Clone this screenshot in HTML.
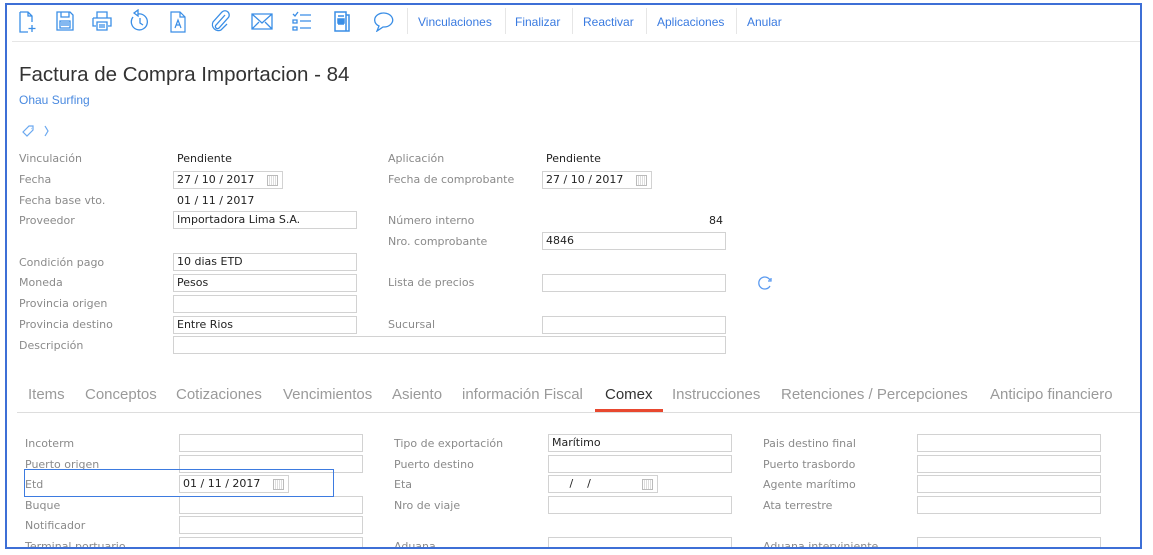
<!DOCTYPE html>
<html><head><meta charset="utf-8"><style>
*{margin:0;padding:0;box-sizing:border-box}
html,body{width:1153px;height:555px;overflow:hidden}
body{background:#fff;position:relative;font-family:"DejaVu Sans",sans-serif}
.frame{position:absolute;left:5px;top:3px;width:1137px;height:546px;border:2px solid #3d6fd6;overflow:hidden}
.a{position:absolute;white-space:nowrap}
.lb{position:absolute;font-size:11px;color:#8a8a8a;white-space:nowrap;line-height:14px}
.v{position:absolute;font-size:11px;color:#222;white-space:nowrap;line-height:14px}
.in{position:absolute;height:18px;border:1px solid #d2d2d2;background:#fff;font-size:11px;color:#222;padding:1px 0 0 3px;line-height:14px;white-space:nowrap;overflow:hidden}
.cal{position:absolute;right:4px;top:3px;width:11px;height:11px;border:1px solid #bbb;background:repeating-linear-gradient(90deg,#fff 0 1px,#ddd 1px 2px)}
.tb{position:absolute;top:6px;font-family:"Liberation Sans",sans-serif;font-size:12px;color:#3a7be0}
.sep{position:absolute;top:8px;width:1px;height:26px;background:#e6e6e6}
.tab{position:absolute;top:386px;font-family:"Liberation Sans",sans-serif;font-size:15px;color:#9a9a9a}
svg{position:absolute}
</style></head><body>
<div class="frame">
<div style="position:absolute;left:-7px;top:-5px;width:1148px;height:553px;overflow:hidden">
<svg style="left:18px;top:11px" width="20" height="22" viewBox="0 0 20 22" fill="none" stroke="#3a8ee6" stroke-width="1.3"><path d="M2 1h8l4 4v6M2 1v20h8M10 1v4h4M14 14v7M10.5 17.5h7"/></svg>
<svg style="left:56px;top:11px" width="18" height="20" viewBox="0 0 18 20" fill="none" stroke="#3a8ee6" stroke-width="1.3"><path d="M1 1h13l3 3v15H1z M5 1v5h8V1 M4 10h10v7H4z"/><path d="M5 12h8M5 14h8" /></svg>
<svg style="left:92px;top:11px" width="20" height="20" viewBox="0 0 20 20" fill="none" stroke="#3a8ee6" stroke-width="1.3"><path d="M5 7V1h10v6M1 7h18v8h-3M1 7v8h3M5 11h10v8H5zM7 14h6M7 16h6"/></svg>
<svg style="left:130px;top:9px" width="20" height="24" viewBox="0 0 20 24" fill="none" stroke="#3a8ee6" stroke-width="1.3"><path d="M8 5a8 8 0 1 1-5 3M8 1v6l-4-3z M10 9v5l3 2"/></svg>
<svg style="left:170px;top:11px" width="16" height="22" viewBox="0 0 16 22" fill="none" stroke="#3a8ee6" stroke-width="1.2"><path d="M1 1h9l5 5v15H1zM10 1v5h5M5 17l3-8 3 8M6 14h4"/></svg>
<svg style="left:210px;top:10px" width="20" height="22" viewBox="0 0 20 22" fill="none" stroke="#3a8ee6" stroke-width="1.3"><path d="M15 5L6 15a2 2 0 0 0 3 3l9-10a4 4 0 0 0-6-6L3 12a6 6 0 0 0 8 8l6-6"/></svg>
<svg style="left:251px;top:13px" width="22" height="17" viewBox="0 0 22 17" fill="none" stroke="#3a8ee6" stroke-width="1.3"><path d="M1 1h20v15H1zM1 1l10 9 10-9M1 16l7-7M21 16l-7-7"/></svg>
<svg style="left:292px;top:11px" width="20" height="21" viewBox="0 0 20 21" fill="none" stroke="#3a8ee6" stroke-width="1.3"><path d="M1 3l2 2 3-4M1 9h4v3H1zM1 16h4v3H1zM8 4h11M8 10h11M8 17h11"/></svg>
<svg style="left:334px;top:11px" width="16" height="21" viewBox="0 0 16 21" fill="none" stroke="#3a8ee6" stroke-width="1.5"><path d="M1 1h11v19H1zM12 4h3v16h-3M4 5h6M4 9h6M4 13h6"/><rect x="4" y="8" width="6" height="4" fill="#3a8ee6"/></svg>
<svg style="left:373px;top:10px" width="22" height="22" viewBox="0 0 22 22" fill="none" stroke="#3a8ee6" stroke-width="1.3"><path d="M6 16a9 7 0 1 1 4 1l-6 4z"/></svg>
<div class="sep" style="left:407px"></div>
<div class="tb" style="left:418px;top:15px">Vinculaciones</div>
<div class="sep" style="left:505px"></div>
<div class="tb" style="left:515px;top:15px">Finalizar</div>
<div class="sep" style="left:572px"></div>
<div class="tb" style="left:583px;top:15px">Reactivar</div>
<div class="sep" style="left:646px"></div>
<div class="tb" style="left:657px;top:15px">Aplicaciones</div>
<div class="sep" style="left:736px"></div>
<div class="tb" style="left:747px;top:15px">Anular</div>
<div class="a" style="left:12px;top:41px;width:1130px;height:1px;background:#e6e6e6"></div>

<div class="a" style="left:19px;top:63px;font-family:'Liberation Sans',sans-serif;font-size:20.5px;color:#333">Factura de Compra Importacion - 84</div>
<div class="a" style="left:19px;top:93px;font-family:'Liberation Sans',sans-serif;font-size:12px;color:#4a8ae0">Ohau Surfing</div>
<svg style="left:21px;top:124px" width="30" height="14" viewBox="0 0 30 14" fill="none" stroke="#6aa8f0" stroke-width="1.2"><path d="M2 8l6-6h4v4l-6 6zM10 4.5h.5M24 2l3 5-3 5"/></svg>

<div class="lb" style="left:19px;top:152px">Vinculación</div><div class="v" style="left:177px;top:152px">Pendiente</div>
<div class="lb" style="left:19px;top:173px">Fecha</div>
<div class="in" style="left:173px;top:171px;width:110px">27 / 10 / 2017<span class="cal"></span></div>
<div class="lb" style="left:19px;top:194px">Fecha base vto.</div><div class="v" style="left:177px;top:194px">01 / 11 / 2017</div>
<div class="lb" style="left:19px;top:214px">Proveedor</div><div class="in" style="left:173px;top:211px;width:184px">Importadora Lima S.A.</div>
<div class="lb" style="left:19px;top:256px">Condición pago</div><div class="in" style="left:173px;top:253px;width:184px">10 dias ETD</div>
<div class="lb" style="left:19px;top:276px">Moneda</div><div class="in" style="left:173px;top:274px;width:184px">Pesos</div>
<div class="lb" style="left:19px;top:297px">Provincia origen</div><div class="in" style="left:173px;top:295px;width:184px"></div>
<div class="lb" style="left:19px;top:318px">Provincia destino</div><div class="in" style="left:173px;top:316px;width:184px">Entre Rios</div>
<div class="lb" style="left:19px;top:339px">Descripción</div><div class="in" style="left:173px;top:336px;width:553px"></div>

<div class="lb" style="left:388px;top:152px">Aplicación</div><div class="v" style="left:546px;top:152px">Pendiente</div>
<div class="lb" style="left:388px;top:173px">Fecha de comprobante</div>
<div class="in" style="left:542px;top:171px;width:110px">27 / 10 / 2017<span class="cal"></span></div>
<div class="lb" style="left:388px;top:214px">Número interno</div><div class="v" style="left:709px;top:214px">84</div>
<div class="lb" style="left:388px;top:235px">Nro. comprobante</div><div class="in" style="left:542px;top:232px;width:184px">4846</div>
<div class="lb" style="left:388px;top:276px">Lista de precios</div><div class="in" style="left:542px;top:274px;width:184px"></div>
<svg style="left:758px;top:276px" width="16" height="14" viewBox="0 0 16 14" fill="none" stroke="#5a9af0" stroke-width="1.3"><path d="M12 10a6 6 0 1 1 0-6M13 2v3h-3"/></svg>
<div class="lb" style="left:388px;top:318px">Sucursal</div><div class="in" style="left:542px;top:316px;width:184px"></div>

<div class="tab" style="left:28px">Items</div>
<div class="tab" style="left:85px">Conceptos</div>
<div class="tab" style="left:176px">Cotizaciones</div>
<div class="tab" style="left:283px">Vencimientos</div>
<div class="tab" style="left:392px">Asiento</div>
<div class="tab" style="left:462px">información Fiscal</div>
<div class="tab" style="left:605px;color:#333">Comex</div>
<div class="tab" style="left:672px">Instrucciones</div>
<div class="tab" style="left:781px">Retenciones / Percepciones</div>
<div class="tab" style="left:990px">Anticipo financiero</div>
<div class="a" style="left:17px;top:412px;width:1125px;height:1px;background:#ddd"></div>
<div class="a" style="left:595px;top:409px;width:68px;height:3px;background:#e8482f"></div>

<div class="lb" style="left:25px;top:437px">Incoterm</div><div class="in" style="left:179px;top:434px;width:184px"></div>
<div class="lb" style="left:25px;top:458px">Puerto origen</div><div class="in" style="left:179px;top:455px;width:184px"></div>
<div class="lb" style="left:25px;top:478px">Etd</div>
<div class="in" style="left:179px;top:475px;width:110px">01 / 11 / 2017<span class="cal"></span></div>
<div class="lb" style="left:25px;top:499px">Buque</div><div class="in" style="left:179px;top:496px;width:184px"></div>
<div class="lb" style="left:25px;top:519px">Notificador</div><div class="in" style="left:179px;top:516px;width:184px"></div>
<div class="lb" style="left:25px;top:540px">Terminal portuario</div><div class="in" style="left:179px;top:537px;width:184px"></div>
<div class="a" style="left:24px;top:469px;width:310px;height:28px;border:1.5px solid #3d7be0"></div>

<div class="lb" style="left:394px;top:437px">Tipo de exportación</div><div class="in" style="left:548px;top:434px;width:184px">Marítimo</div>
<div class="lb" style="left:394px;top:458px">Puerto destino</div><div class="in" style="left:548px;top:455px;width:184px"></div>
<div class="lb" style="left:394px;top:478px">Eta</div>
<div class="in" style="left:548px;top:475px;width:110px">&nbsp;&nbsp;&nbsp;&nbsp;&nbsp;/&nbsp;&nbsp;&nbsp;&nbsp;/<span class="cal"></span></div>
<div class="lb" style="left:394px;top:499px">Nro de viaje</div><div class="in" style="left:548px;top:496px;width:184px"></div>
<div class="lb" style="left:394px;top:540px">Aduana</div><div class="in" style="left:548px;top:537px;width:184px"></div>

<div class="lb" style="left:763px;top:437px">Pais destino final</div><div class="in" style="left:917px;top:434px;width:184px"></div>
<div class="lb" style="left:763px;top:458px">Puerto trasbordo</div><div class="in" style="left:917px;top:455px;width:184px"></div>
<div class="lb" style="left:763px;top:478px">Agente marítimo</div><div class="in" style="left:917px;top:475px;width:184px"></div>
<div class="lb" style="left:763px;top:499px">Ata terrestre</div><div class="in" style="left:917px;top:496px;width:184px"></div>
<div class="lb" style="left:763px;top:540px">Aduana interviniente</div><div class="in" style="left:917px;top:537px;width:184px"></div>
</div>
</div>
</body></html>
